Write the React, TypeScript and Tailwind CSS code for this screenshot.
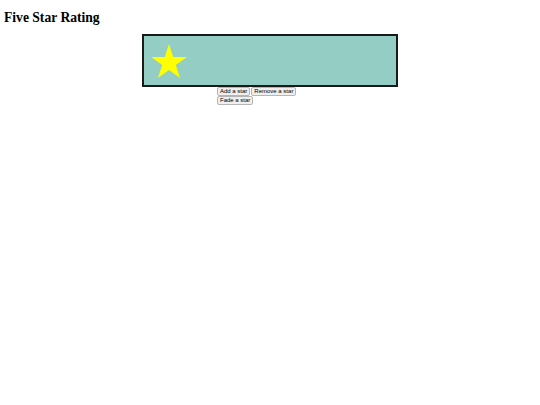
import React from "react";

function Star() {
  return (
    <svg width="36" height="34" viewBox="0 0 100 95" className="block">
      <polygon
        points="50,0 61.8,36.3 100,36.3 69.1,58.8 80.9,95 50,72.6 19.1,95 30.9,58.8 0,36.3 38.2,36.3"
        fill="#ffff00"
      />
    </svg>
  );
}

export default function App() {
  return (
    <div className="min-h-screen bg-white">
      <h1 className="px-[4px] pt-[9px] text-[13.6px] font-bold leading-[17px] text-black [font-family:'Liberation_Serif',serif]">
        Five Star Rating
      </h1>
      <div className="mx-auto mt-[8px] flex h-[53px] w-[256px] items-start border-2 border-[#1a1a1a] bg-[#93cdc4] pl-[7px] pt-[8px]">
        <Star />
      </div>
      <div className="mx-auto flex w-[106px] flex-wrap gap-x-[1px] [font-family:'Liberation_Sans',sans-serif]">
        <button className="h-[9px] rounded-[2px] border border-[#b5b5b5] bg-[#efefef] px-[2px] text-[6px] leading-[7px] text-black">
          Add a star
        </button>
        <button className="h-[9px] rounded-[2px] border border-[#b5b5b5] bg-[#efefef] px-[2px] text-[6px] leading-[7px] text-black">
          Remove a star
        </button>
        <button className="h-[9px] rounded-[2px] border border-[#b5b5b5] bg-[#efefef] px-[2px] text-[6px] leading-[7px] text-black">
          Fade a star
        </button>
      </div>
    </div>
  );
}
